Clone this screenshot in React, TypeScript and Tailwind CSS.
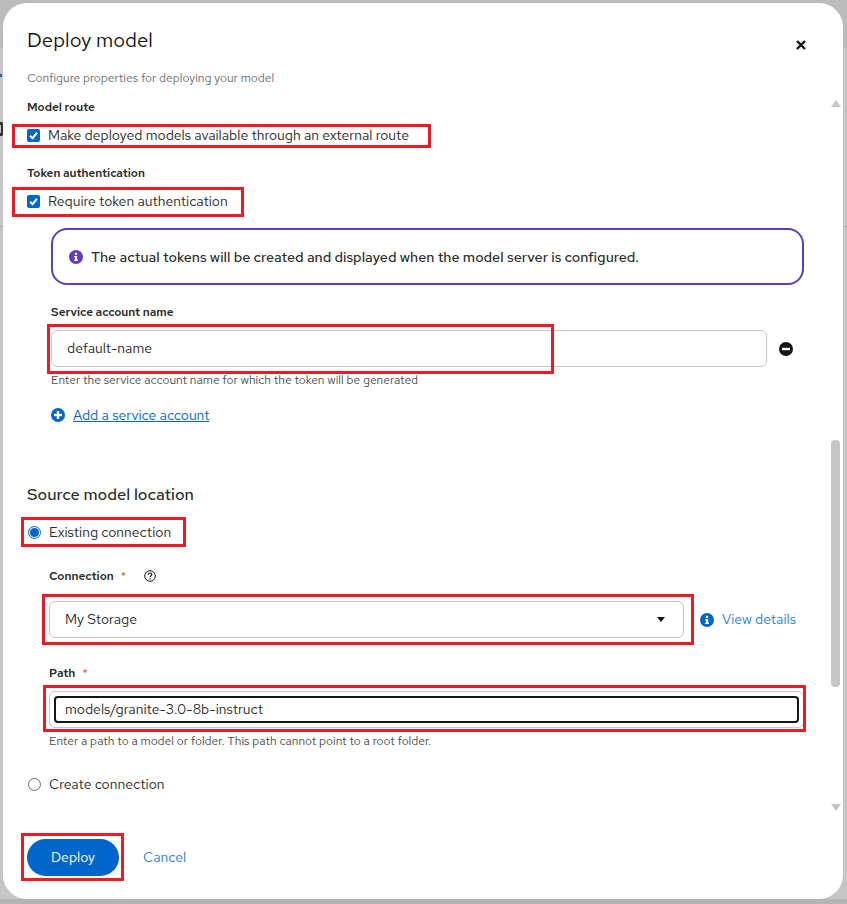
const FONT = "font-['Red_Hat_Text','Noto_Sans',sans-serif]"

// red annotation boxes drawn over the screenshot
const MARKS = [
  'left-[12px] top-[124px] w-[419px] h-[24px]',
  'left-[12px] top-[187px] w-[232px] h-[30px]',
  'left-[47px] top-[324px] w-[507px] h-[50px]',
  'left-[21px] top-[517px] w-[165px] h-[30px]',
  'left-[42px] top-[594px] w-[652px] h-[51px]',
  'left-[43px] top-[685px] w-[763px] h-[47px]',
  'left-[21px] top-[833px] w-[103px] h-[48px]',
]

function Check() {
  return (
    <span className="flex h-[13px] w-[13px] shrink-0 items-center justify-center rounded-[2px] bg-[#0066cc]">
      <svg viewBox="0 0 12 12" className="h-[11px] w-[11px]" fill="none" stroke="white" strokeWidth="2.2">
        <path d="M2.2 6.3 5 9l4.8-6" />
      </svg>
    </span>
  )
}

function InfoIcon({ color }: { color: string }) {
  return (
    <svg viewBox="0 0 14 14" className="h-[14px] w-[14px] shrink-0">
      <circle cx="7" cy="7" r="7" fill={color} />
      <rect x="5.9" y="2.8" width="2.2" height="2.1" fill="white" />
      <path d="M5.2 6h2.9v3.6h.8v1.3H5.2V9.6H6V7.3h-.8z" fill="white" />
    </svg>
  )
}

function SignIcon({ plus, color }: { plus?: boolean; color: string }) {
  return (
    <svg viewBox="0 0 14 14" className="h-[14px] w-[14px] shrink-0">
      <circle cx="7" cy="7" r="7" fill={color} />
      <rect x="3" y="5.8" width="8" height="2.4" fill="white" />
      {plus ? <rect x="5.8" y="3" width="2.4" height="8" fill="white" /> : null}
    </svg>
  )
}

function FieldLabel({ text, required }: { text: string; required?: boolean }) {
  return (
    <p className="text-[11.8px] font-semibold leading-[16px] text-[#2a2a2a]">
      {text}
      {required ? <span className="ml-[7px] align-top text-[12px] font-normal text-[#d0603a]">*</span> : null}
    </p>
  )
}

export default function App() {
  return (
    <div className={`${FONT} relative h-[904px] w-[847px] overflow-hidden bg-[#c6c6c6] p-[3px]`}>
      <div className="absolute inset-x-0 top-0 h-[48px] bg-[#bcbcbc]" />
      <div className="absolute inset-x-0 top-[226px] h-px bg-[#a8a8a8]" />
      <div className="absolute inset-x-0 bottom-0 h-[5px] bg-[#b4b4b4]" />
      <span className="absolute left-0 top-[74px] h-[3px] w-[2px] bg-[#3a5f9a]" />
      <span className="absolute left-0 top-[122px] h-[14px] w-[3px] rounded-r-[2px] border-y-[3px] border-r-2 border-[#333]" />

      <div className="relative flex h-[896px] w-[840px] flex-col rounded-[24px] bg-white">
        <header className="flex justify-between pl-[24px] pr-[37px] pt-[25px]">
          <div>
            <h1 className="text-[20.4px] font-normal leading-[24px] text-[#151515]">Deploy model</h1>
            <p className="mt-[18px] text-[12px] leading-[16px] text-[#6a6e73]">
              Configure properties for deploying your model
            </p>
          </div>
          <svg viewBox="0 0 10 10" className="mt-[12px] h-[10px] w-[10px]" fill="none" stroke="#151515" strokeWidth="2.4">
            <path d="M1 1l8 8M9 1 1 9" />
          </svg>
        </header>

        <div className="flex min-h-0 flex-1">
          <main className="min-w-0 flex-1 pl-[24px] pt-[13px]">
            <FieldLabel text="Model route" />
            <label className="mt-[10px] flex h-[20px] items-center gap-[8px] text-[14px] text-[#2a2a2a]">
              <Check />
              Make deployed models available through an external route
            </label>
            <div className="mt-[20px]">
              <FieldLabel text="Token authentication" />
            </div>
            <label className="mt-[10px] flex h-[20px] items-center gap-[8px] text-[14px] text-[#2a2a2a]">
              <Check />
              Require token authentication
            </label>

            <div className="ml-[24px] mt-[17px] w-[753px]">
              <div className="flex h-[57px] items-center gap-[8px] rounded-[16px] border-2 border-[#5e40be] pl-[16px]">
                <InfoIcon color="#5e40be" />
                <p className="text-[14.3px] font-medium text-[#2a2a2a]">
                  The actual tokens will be created and displayed when the model server is configured.
                </p>
              </div>

              <div className="mt-[19px]">
                <FieldLabel text="Service account name" />
              </div>
              <div className="mt-[10px] flex items-center">
                <div className="flex h-[37px] w-[716px] items-center rounded-[6px] border border-[#c7c7c7] pl-[15px] text-[14px] text-[#2a2a2a]">
                  default-name
                </div>
                <span className="ml-[12px]">
                  <SignIcon color="#151515" />
                </span>
              </div>
              <p className="mt-[5px] text-[12px] leading-[16px] text-[#4d4d4d]">
                Enter the service account name for which the token will be generated
              </p>
              <div className="mt-[17px] flex items-center gap-[8px] text-[14px] leading-[20px] text-[#0066cc]">
                <SignIcon plus color="#0066cc" />
                <span className="underline">Add a service account</span>
              </div>
            </div>

            <h2 className="mt-[58px] text-[16.4px] font-medium leading-[22px] text-[#2a2a2a]">Source model location</h2>

            <label className="ml-[1px] mt-[17px] flex h-[20px] items-center gap-[8px] text-[14px] text-[#2a2a2a]">
              <span className="flex h-[13px] w-[13px] items-center justify-center rounded-full border border-[#0066cc]">
                <span className="h-[9px] w-[9px] rounded-full bg-[#0066cc]" />
              </span>
              Existing connection
            </label>

            <div className="ml-[22px] w-[755px]">
              <div className="mt-[26px] flex items-center">
                <FieldLabel text="Connection" required />
                <svg viewBox="0 0 12 12" className="ml-[18px] h-[12px] w-[12px]" fill="none" stroke="#151515">
                  <circle cx="6" cy="6" r="5.3" />
                  <path d="M4.3 4.7c0-2.3 3.5-2.2 3.500-.1 0 1.300-1.800 1.400-1.800 2.700" strokeWidth="1.200" />
                  <circle cx="6" cy="9" r=".7" fill="#151515" stroke="none" />
                </svg>
              </div>
              <div className="mt-[17px] flex items-center">
                <div className="flex h-[37px] w-[635px] items-center justify-between rounded-[6px] border border-[#c7c7c7] pl-[15px] pr-[18px] text-[14px] text-[#2a2a2a]">
                  My Storage
                  <svg viewBox="0 0 10 6" className="h-[5px] w-[8px]" fill="#151515">
                    <path d="M0 0h10L5 6z" />
                  </svg>
                </div>
                <span className="ml-[16px]">
                  <InfoIcon color="#0066cc" />
                </span>
                <span className="ml-[8px] text-[14px] text-[#2a7fd6]">View details</span>
              </div>

              <div className="mt-[27px]">
                <FieldLabel text="Path" required />
              </div>
              <div className="mt-[10px] rounded-[6px] border border-[#c7c7c7] p-[4px]">
                <div className="flex h-[27px] items-center rounded-[4px] border-2 border-[#151515] pl-[9px] text-[14px] text-[#2a2a2a]">
                  models/granite-3.0-8b-instruct
                </div>
              </div>
              <p className="mt-[5px] text-[12px] leading-[16px] text-[#4d4d4d]">
                Enter a path to a model or folder. This path cannot point to a root folder.
              </p>
            </div>

            <label className="ml-[1px] mt-[25px] flex h-[20px] items-center gap-[8px] text-[14px] text-[#2a2a2a]">
              <span className="h-[13px] w-[13px] rounded-full border border-[#6a6e73]" />
              Create connection
            </label>
          </main>

          <aside className="mr-[3px] mt-[14px] flex w-[9px] shrink-0 flex-col items-center">
            <span className="h-0 w-0 shrink-0 border-x-[5px] border-b-[7px] border-x-transparent border-b-[#c6c6c6]" />
            <span className="mt-[333px] h-[247px] w-[9px] shrink-0 rounded-[4px] bg-[#c6c6c6]" />
            <span className="mt-[117px] h-0 w-0 shrink-0 border-x-[5px] border-t-[7px] border-x-transparent border-t-[#c6c6c6]" />
          </aside>
        </div>

        <footer className="flex items-center pb-[23px] pl-[24px]">
          <button type="button" className="h-[37px] w-[92px] rounded-full bg-[#0066cc] text-[14px] text-white">
            Deploy
          </button>
          <button type="button" className="ml-[24px] text-[14px] text-[#2a7fd6]">
            Cancel
          </button>
        </footer>
      </div>

      {MARKS.map((mark) => (
        <div key={mark} className={`absolute border-[3px] border-[#ed1c24] ${mark}`} />
      ))}
    </div>
  )
}
